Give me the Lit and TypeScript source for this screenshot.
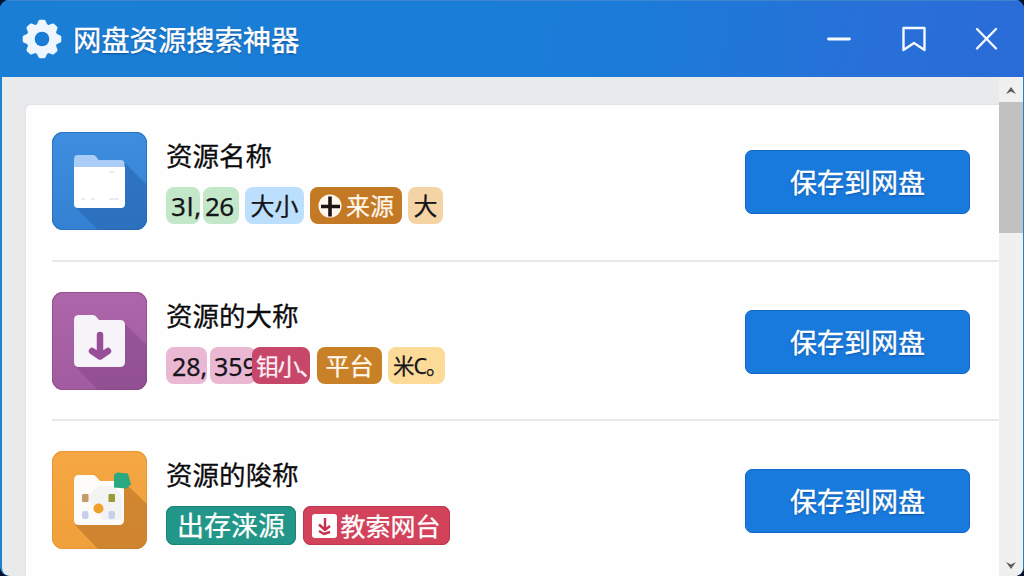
import { LitElement, css, html, svg } from "lit";
import { customElement, property } from "lit/decorators.js";

const tagIcons: any = {
  plus: svg`
    <circle cx="12" cy="12" r="11.5" fill="#fff6ee" />
    <path d="M12 2.500v20M3 12.500h19" stroke="#1b1512" stroke-width="3.6" />
  `,
  download: svg`
    <rect x="0" y="0" width="25" height="24" rx="3" fill="#fff" />
    <path
      d="M13 4v12M7 10.500l6 5.500l5 -4M7 17l5 3l6 -2"
      fill="none"
      stroke="#c5304c"
      stroke-width="2.4"
    />
  `,
};

const resources = [
  {
    icon: "folder",
    name: "资源名称",
    tags: [
      { text: "3l,", color: "green first" },
      { text: "26", color: "green second" },
      { text: "大小", color: "blue" },
      { text: "来源", color: "brown", icon: "plus" },
      { text: "大", color: "tan" },
    ],
  },
  {
    icon: "download",
    name: "资源的大称",
    tags: [
      { text: "28,", color: "pink first" },
      { text: "359", color: "pink second" },
      { text: "钼小、", color: "rose" },
      { text: "平台", color: "amber" },
      { text: "米C。", color: "yellow" },
    ],
  },
  {
    icon: "apps",
    name: "资源的陖称",
    tags: [
      { text: "出存涞源", color: "teal" },
      { text: "教索网台", color: "red", icon: "download" },
    ],
  },
];

@customElement("resource-icon")
export class ResourceIcon extends LitElement {
  @property() name = "folder";

  renderFolder() {
    return svg`
      <path d="M73 31L95 53V90Q95 98 87 98H46L23 75Z" fill="#2460aa" opacity=".5" />
      <path d="M22 37V27q0 -4 4 -4h15q2 0 3.500 2l2 3h22q4 0 4 4v6z" fill="#a9cdf6" />
      <path d="M22 35h51v37q0 4 -4 4h-43q-4 0 -4 -4z" fill="#fff" />
      <path d="M57 40h5M29 67h4M39 67h4M57 67h10" stroke="#e7e3ee" stroke-width="1.500" />
    `;
  }

  renderDownload() {
    return svg`
      <path d="M73 32L95 53V90Q95 98 87 98H46L23 74Z" fill="#7b4180" opacity=".4" />
      <path
        d="M22 28q0 -5 5 -5h14q2 0 3 1.500l3 3.500h21q5 0 5 5v37q0 5 -5 5h-41q-5 0 -5 -5z"
        fill="#f6f3f9"
      />
      <path
        d="M48 43v18M40 59l8 5.500l8 -5.500"
        fill="none"
        stroke="#974f98"
        stroke-width="6.500"
        stroke-linecap="round"
        stroke-linejoin="round"
      />
    `;
  }

  renderApps() {
    return svg`
      <path d="M73 32L95 53V90Q95 98 87 98H46L23 74Z" fill="#b56d24" opacity=".55" />
      <path
        d="M22 29q0 -5 5 -5h14q2 0 3 1.500l4 4.500h19q5 0 5 5v34q0 5 -5 5h-40q-5 0 -5 -5z"
        fill="#fdfcfb"
      />
      <path d="M34 45l13 -10l15 0l8 10v24H51z" fill="#eef0f1" opacity=".7" />
      <rect x="30" y="43" width="6.500" height="8" rx="1" fill="#c39b68" />
      <rect x="56.500" y="43" width="6.500" height="8" rx="1" fill="#9c9a32" />
      <rect x="30" y="60" width="6.500" height="8" rx="2" fill="#c6d0ec" />
      <rect x="56.500" y="60" width="6.500" height="8" rx="2" fill="#c6d0ec" />
      <circle cx="46.500" cy="57.500" r="5" fill="#f0a02c" />
      <path d="M62 24l3 -2.500l11 1l3 11l-5 4l-12 -1z" fill="#2aa87f" />
    `;
  }

  render() {
    return html`
      <svg viewBox="0 0 95 98" class=${this.name}>
        ${this.name == "folder"
          ? this.renderFolder()
          : this.name == "download"
          ? this.renderDownload()
          : this.renderApps()}
      </svg>
    `;
  }

  static styles = css`
    :host {
      display: block;
      flex: none;
      width: 95px;
      height: 98px;
    }

    svg {
      display: block;
      width: 95px;
      height: 98px;
      border-radius: 11px;
    }

    .folder {
      background: linear-gradient(#3e8edf, #3481d2);
      box-shadow: inset 0 0 0 1px #2b74c0;
    }

    .download {
      background: linear-gradient(#ad66aa, #a15b9f);
      box-shadow: inset 0 0 0 1px #96518f;
    }

    .apps {
      background: linear-gradient(#f5a743, #f0a03b);
      box-shadow: inset 0 0 0 1px #e4983a;
    }
  `;
}

@customElement("resource-row")
export class ResourceRow extends LitElement {
  @property({ attribute: false }) resource: any;

  render() {
    return html`
      <resource-icon name=${this.resource.icon}></resource-icon>
      <div class="info">
        <div class="name">${this.resource.name}</div>
        <div class="tags">
          ${this.resource.tags.map(
            (tag: any) => html`
              <span class="tag ${tag.color}"
                >${tag.icon
                  ? html`<svg viewBox="0 0 25 24">${tagIcons[tag.icon]}</svg>`
                  : ""}<span class="label">${tag.text}</span></span
              >
            `
          )}
        </div>
      </div>
      <button>保存到网盘</button>
    `;
  }

  static styles = css`
    :host {
      display: flex;
      align-items: flex-start;
    }

    .info {
      flex: 1;
      margin-left: 19px;
      min-width: 0;
    }

    .name {
      height: 48px;
      line-height: 49px;
      font-size: 26.5px;
      color: #0c0c0e;
      white-space: nowrap;
      -webkit-text-stroke: 0.3px currentColor;
    }

    .tags {
      display: flex;
      margin-top: 7px;
    }

    .tag {
      display: flex;
      align-items: center;
      justify-content: center;
      box-sizing: border-box;
      height: 37px;
      margin-right: 6px;
      border-radius: 8px;
      font-size: 24px;
      line-height: 36px;
      color: #15151a;
      white-space: nowrap;
      -webkit-text-stroke: 0.25px currentColor;
    }

    .tag svg {
      flex: none;
      width: 25px;
      height: 24px;
      margin-right: 3px;
    }

    .green {
      width: 36px;
      background: #c3e8c9;
    }

    .green.first {
      width: 34px;
      margin-right: 3px;
      justify-content: flex-start;
      padding-left: 5px;
      font-size: 26px;
      letter-spacing: 0.8px;
    }

    .green.second {
      justify-content: flex-start;
      padding-left: 2px;
      font-size: 26px;
      letter-spacing: -0.5px;
    }

    .blue {
      width: 59px;
      background: #bbdffc;
    }

    .brown {
      width: 92px;
      background: #c47a25;
      color: #fff6ea;
    }

    .tan {
      width: 35px;
      background: #f4d3a4;
    }

    .pink {
      width: 46px;
      background: #eab8d2;
    }

    .pink.first {
      width: 41px;
      margin-right: 3px;
      justify-content: flex-start;
      padding-left: 6px;
      font-size: 25px;
    }

    .pink.second {
      margin-right: -4px;
      justify-content: flex-start;
      padding-left: 4px;
      font-size: 25px;
    }

    .rose {
      width: 58px;
      margin-right: 7px;
      background: #c6476a;
      color: #fff0f4;
      justify-content: flex-start;
      padding-left: 4px;
      font-size: 23px;
      letter-spacing: -1.5px;
    }

    .amber {
      width: 65px;
      background: #c98127;
      color: #fff8ec;
    }

    .yellow {
      width: 57px;
      background: #fcdb98;
      font-size: 21.5px;
      letter-spacing: -1px;
      justify-content: flex-start;
      padding-left: 5px;
    }

    .teal,
    .red {
      height: 39px;
      color: #fff;
    }

    .teal {
      width: 130px;
      margin-right: 7px;
      background: #229688;
      box-shadow: inset 0 0 0 1px #17857b;
      font-size: 27px;
    }

    .red {
      width: 147px;
      background: #d2435b;
      box-shadow: inset 0 0 0 1px #bd3750;
      font-size: 25px;
    }

    button {
      flex: none;
      width: 225px;
      height: 64px;
      margin-top: 18px;
      padding: 2px 0 0;
      border: 1px solid #1269c4;
      border-radius: 7px;
      background: #187adc;
      color: #fff;
      font-family: inherit;
      font-size: 27px;
      font-weight: 400;
      line-height: 60px;
      text-shadow: 0 1px 2px #0b4d9b;
      -webkit-text-stroke: 0.4px currentColor;
    }
  `;
}

@customElement("app-root")
export class AppRoot extends LitElement {
  render() {
    return html`
      <div class="window">
        <header>
          <svg class="gear" viewBox="-20 -20 40 40">
            <g fill="#edf5ff">
              <circle r="15.500" />
              ${[0, 45, 90, 135, 180, 225, 270, 315].map(
                (angle) => svg`
                  <path
                    d="M-5.500 -14L-3.500 -18.300Q-3 -19.300 -2 -19.300H2Q3 -19.300 3.500 -18.300L5.500 -14Z"
                    transform="rotate(${angle})"
                  />
                `
              )}
            </g>
            <circle r="7.300" fill="#197dd6" />
          </svg>
          <h1>网盘资源搜索神器</h1>
          <div class="controls">
            <svg viewBox="0 0 26 28">
              <path d="M2.500 14h21" stroke-width="2.800" />
            </svg>
            <svg viewBox="0 0 26 28">
              <path d="M3.500 3h21v22l-10.500 -7l-10.500 7z" />
            </svg>
            <svg viewBox="0 0 26 28">
              <path d="M3 4l19 19.500M22 4l-19 19.500" />
            </svg>
          </div>
        </header>
        <main>
          <div class="list">
            ${resources.map(
              (resource) => html`
                <resource-row .resource=${resource}></resource-row>
              `
            )}
          </div>
          <div class="scrollbar">
            <svg viewBox="0 0 12 9"><path d="M1 8L6 1L11 8L6 5.500Z" /></svg>
            <div class="thumb"></div>
            <svg viewBox="0 0 12 9"><path d="M1 1L6 8L11 1L6 3.500Z" /></svg>
          </div>
        </main>
      </div>
    `;
  }

  static styles = css`
    :host {
      display: block;
      height: 576px;
      overflow: hidden;
      background: #04122c;
      font-family: "Noto Sans", "Noto Sans CJK SC", sans-serif;
    }

    .window {
      display: flex;
      flex-direction: column;
      box-sizing: border-box;
      height: 576px;
      padding: 0 1px 0 2px;
      border-radius: 9px;
      overflow: hidden;
      background: #2482cc;
    }

    header {
      display: flex;
      align-items: center;
      flex: none;
      box-sizing: border-box;
      height: 77px;
      margin: 0 -1px 0 -2px;
      padding: 1px 24px 0 22px;
      background: linear-gradient(100deg, #1a7fd4 0%, #1a7cd8 60%, #2870d8 85%, #2a6bd8 100%);
      box-shadow: inset 0 1px 0 #3d86cf;
    }

    .gear {
      width: 40px;
      height: 40px;
    }

    h1 {
      margin: 1px 0 0 11px;
      font-size: 28.3px;
      font-weight: 400;
      line-height: 40px;
      color: #fff;
      text-shadow: 0 1px 2px #0d4b94;
      -webkit-text-stroke: 0.4px currentColor;
    }

    .controls {
      display: flex;
      gap: 48px;
      margin-left: auto;
    }

    .controls svg {
      width: 26px;
      height: 28px;
      fill: none;
      stroke: #f5faff;
      stroke-width: 2.4;
      stroke-linecap: round;
      stroke-linejoin: round;
    }

    main {
      display: flex;
      flex: 1;
      min-height: 0;
      background: #e9eaec;
      border-radius: 0 0 8px 8px;
      overflow: hidden;
    }

    .list {
      flex: 1;
      margin: 28px 0 0 24px;
      padding-left: 26px;
      border-top-left-radius: 5px;
      background: #fefefe;
      box-shadow: 0 0 2px #d3d4d7;
    }

    resource-row {
      box-sizing: border-box;
      height: 159px;
      padding: 30px 29px 0 0;
      border-bottom: 2px solid #e8e8ea;
    }

    resource-row:first-child {
      height: 157px;
      padding-top: 27px;
    }

    resource-row:last-child {
      border-bottom: none;
    }

    .scrollbar {
      display: flex;
      flex-direction: column;
      align-items: center;
      width: 24px;
      background: #f0f0f1;
    }

    .scrollbar svg {
      width: 12px;
      height: 9px;
      margin: 9px 0 7px;
      fill: #5b5b5d;
    }

    .scrollbar svg:last-child {
      margin: auto 0 6px;
    }

    .thumb {
      width: 24px;
      height: 131px;
      background: #c1c1c2;
    }
  `;
}
